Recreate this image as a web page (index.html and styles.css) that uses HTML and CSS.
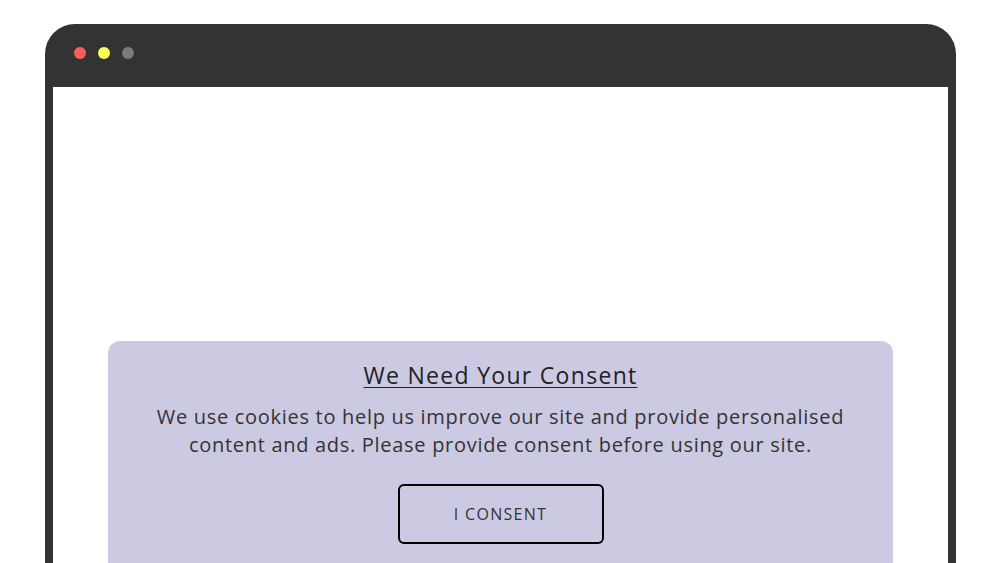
FILE: index.html
```html
<!DOCTYPE html>
<html>
  <head>
    <meta name="viewport" content="width=device-width, initial-scale=1.0" />
    <title>Cookie Consent</title>
    <link rel="stylesheet" href="styles.css">
  </head>
  <body>
    <div class="browser">
      <div class="browser-bar">
        <span class="dot dot-red"></span>
        <span class="dot dot-yellow"></span>
        <span class="dot dot-gray"></span>
      </div>
      <div class="browser-page">
        <div class="consent">
          <h2 class="consent-title">We Need Your Consent</h2>
          <p class="consent-text">
            We use cookies to help us improve our site and provide personalised
            content and ads. Please provide consent before using our site.
          </p>
          <button class="consent-button">I CONSENT</button>
        </div>
      </div>
    </div>
  </body>
</html>
```

FILE: styles.css
```css
body {
  margin: 0;
  padding: 0;
  background-color: #fff;
  font-family: "Open Sans", "DejaVu Sans", sans-serif;
  height: 563px;
  overflow: hidden;
}

.browser {
  margin: 24px 44px 0 45px;
  background-color: #333;
  border-radius: 30px 30px 0 0;
  padding: 0 8px;
  height: 539px;
  overflow: hidden;
}

.browser-bar {
  height: 63px;
  display: flex;
  align-items: center;
  gap: 12px;
  padding-left: 21px;
  padding-bottom: 5px;
  box-sizing: border-box;
}

.dot {
  width: 12px;
  height: 12px;
  border-radius: 50%;
}

.dot-red {
  background-color: #ff5b5b;
}

.dot-yellow {
  background-color: #ffff5a;
}

.dot-gray {
  background-color: #7a7a7a;
}

.browser-page {
  background-color: #fff;
  height: 100%;
  padding: 254px 55px 0;
}

.consent {
  background-color: #cccae2;
  border-radius: 12px;
  padding: 18px 40px 40px;
  text-align: center;
  color: #222;
}

.consent-title {
  margin: 0;
  font-size: 23px;
  font-weight: normal;
  letter-spacing: 1.3px;
  text-decoration: underline;
  text-underline-offset: 3px;
  text-decoration-thickness: 1px;
  line-height: 32px;
}

.consent-text {
  margin: 12px 0 25px;
  font-size: 20px;
  line-height: 28px;
  letter-spacing: 0.7px;
  color: #333;
}

.consent-button {
  width: 206px;
  height: 60px;
  background: transparent;
  border: 2px solid #000;
  border-radius: 6px;
  font-family: inherit;
  font-size: 16px;
  letter-spacing: 1.3px;
  color: #333;
  cursor: pointer;
}
```
